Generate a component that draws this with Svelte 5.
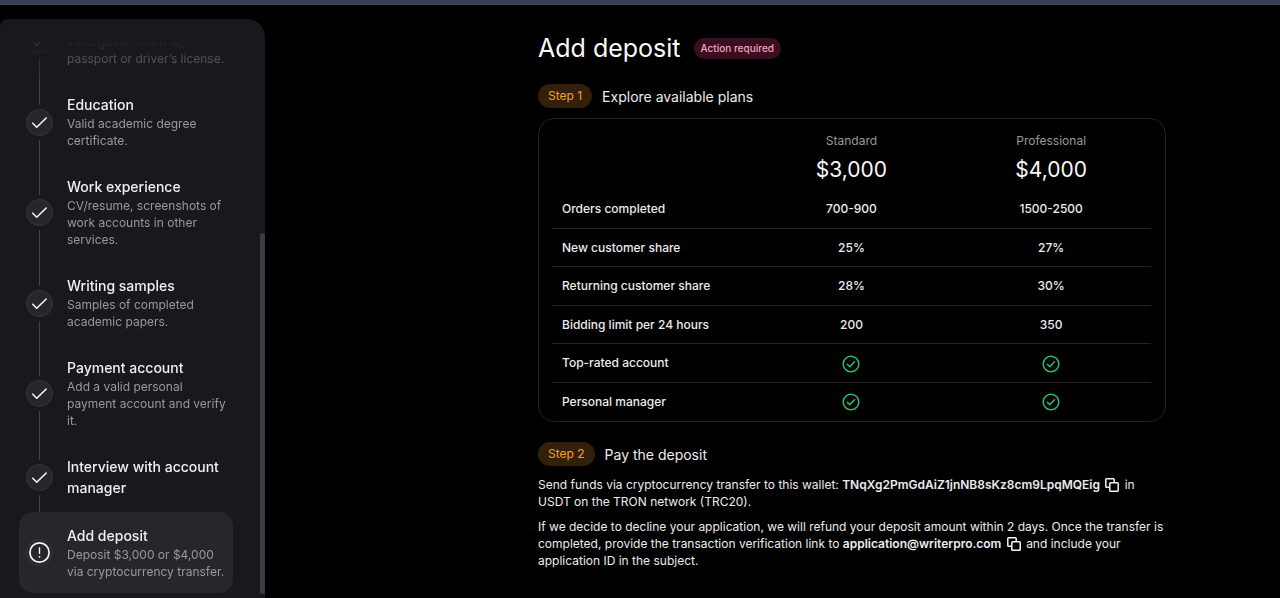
<script>
  const steps = [
    { title: 'ID document', text: 'Valid government ID, passport or driver’s license.', done: true },
    { title: 'Education', text: 'Valid academic degree certificate.', done: true },
    { title: 'Work experience', text: 'CV/resume, screenshots of work accounts in other services.', done: true },
    { title: 'Writing samples', text: 'Samples of completed academic papers.', done: true },
    { title: 'Payment account', text: 'Add a valid personal payment account and verify it.', done: true },
    { title: 'Interview with account manager', text: '', done: true },
    { title: 'Add deposit', text: 'Deposit $3,000 or $4,000 via cryptocurrency transfer.', done: false }
  ];

  const plans = [
    { name: 'Standard', price: '$3,000' },
    { name: 'Professional', price: '$4,000' }
  ];

  // true is drawn as a green check
  const features = [
    { label: 'Orders completed', values: ['700-900', '1500-2500'] },
    { label: 'New customer share', values: ['25%', '27%'] },
    { label: 'Returning customer share', values: ['28%', '30%'] },
    { label: 'Bidding limit per 24 hours', values: ['200', '350'] },
    { label: 'Top-rated account', values: [true, true] },
    { label: 'Personal manager', values: [true, true] }
  ];

  const wallet = 'TNqXg2PmGdAiZ1jnNB8sKz8cm9LpqMQEig';
  const email = 'application@writerpro.com';

  function copy(value) {
    navigator.clipboard?.writeText(value);
  }
</script>

{#snippet copyButton(value, label)}
  <button class="copy" type="button" aria-label={label} onclick={() => copy(value)}>
    <svg viewBox="0 0 14 14" fill="none" stroke="currentColor" stroke-width="1.5" stroke-linejoin="round">
      <path d="M4.8 9.2H1.6a.8.8 0 0 1-.8-.8V1.6a.8.8 0 0 1 .8-.8h6.8a.8.8 0 0 1 .8.8v3.2" />
      <rect x="4.8" y="4.8" width="8.4" height="8.4" rx="0.8" />
    </svg>
  </button>
{/snippet}

<div class="page">
  <div class="topbar"></div>

  <div class="layout">
    <aside class="sidebar">
      <nav class="scroller" aria-label="Application steps">
        <ol class="steps">
          {#each steps as step}
            <li class="step" class:active={!step.done}>
              <div class="rail">
                <span class="line"></span>
                <span class="marker">
                  {#if step.done}
                    <svg viewBox="0 0 27 27" fill="none" stroke="currentColor" stroke-width="1.6" stroke-linecap="round" stroke-linejoin="round">
                      <path d="M6.8 14.2l3.9 4L20.2 9" />
                    </svg>
                  {:else}
                    <svg viewBox="0 0 27 27" fill="none" stroke="currentColor" stroke-linecap="round">
                      <circle cx="13.5" cy="13.5" r="9.6" stroke-width="1.7" />
                      <path d="M13.5 8.8v5.6" stroke-width="1.4" />
                      <circle cx="13.5" cy="17.8" r="0.9" fill="currentColor" stroke="none" />
                    </svg>
                  {/if}
                </span>
                <span class="line"></span>
              </div>
              <div class="step-body">
                <h2 class="step-title">{step.title}</h2>
                {#if step.text}
                  <p class="step-text">{step.text}</p>
                {/if}
              </div>
            </li>
          {/each}
        </ol>
      </nav>
      <div class="thumb"></div>
    </aside>

    <main class="main">
      <div class="content">
        <header class="heading">
          <h1>Add deposit</h1>
          <span class="badge">Action required</span>
        </header>

        <section>
          <div class="section-head">
            <span class="pill">Step 1</span>
            <h2>Explore available plans</h2>
          </div>

          <div class="plans">
            <table>
              <thead>
                <tr>
                  <td></td>
                  {#each plans as plan}
                    <th scope="col">
                      <div class="plan-name">{plan.name}</div>
                      <div class="plan-price">{plan.price}</div>
                    </th>
                  {/each}
                </tr>
              </thead>
              <tbody>
                {#each features as feature}
                  <tr>
                    <th scope="row">{feature.label}</th>
                    {#each feature.values as value}
                      <td>
                        {#if value === true}
                          <svg class="check" viewBox="0 0 18 18" fill="none" stroke="currentColor" stroke-width="1.5" stroke-linecap="round" stroke-linejoin="round" role="img" aria-label="Included">
                            <circle cx="9" cy="9" r="7.8" />
                            <path d="M5.3 9.2l2.5 2.5 4.7-4.9" />
                          </svg>
                        {:else}
                          {value}
                        {/if}
                      </td>
                    {/each}
                  </tr>
                {/each}
              </tbody>
            </table>
          </div>
        </section>

        <section class="payment">
          <div class="section-head">
            <span class="pill">Step 2</span>
            <h2>Pay the deposit</h2>
          </div>

          <p>
            Send funds via cryptocurrency transfer to this wallet: <strong>{wallet}</strong>
            {@render copyButton(wallet, 'Copy wallet address')} in USDT on the TRON network (TRC20).
          </p>
          <p>
            If we decide to decline your application, we will refund your deposit amount within 2 days.
            Once the transfer is completed, provide the transaction verification link to <strong>{email}</strong>
            {@render copyButton(email, 'Copy email')} and include your application ID in the subject.
          </p>
        </section>
      </div>
    </main>
  </div>
</div>

<style>
  :global(body) {
    margin: 0;
    background: #000;
  }

  .page {
    display: flex;
    flex-direction: column;
    height: 100vh;
    overflow: hidden;
    background: #000;
    color: #ececee;
    font-family: Inter, 'Liberation Sans', sans-serif;
    font-size: 12px;
    line-height: 17px;
  }

  h1,
  h2,
  p,
  ol {
    margin: 0;
    padding: 0;
  }

  .topbar {
    flex: none;
    height: 4px;
    background: #384057;
    border-bottom: 1px solid #41454f;
  }

  .layout {
    flex: 1;
    display: flex;
    min-height: 0;
  }

  /* Sidebar */
  .sidebar {
    position: relative;
    flex: none;
    box-sizing: border-box;
    width: 265px;
    margin-top: 14px;
    padding: 21px 32px 5px 19px;
    background: #19181c;
    border-radius: 8px 18px 0 0;
  }

  /* reversed column keeps the list scrolled to the current step */
  .scroller {
    display: flex;
    flex-direction: column-reverse;
    height: 100%;
    overflow-y: auto;
    scrollbar-width: none;
    mask-image: linear-gradient(transparent, #000 44px);
  }

  .thumb {
    position: absolute;
    right: 0;
    top: 37%;
    bottom: 4px;
    width: 5px;
    border-radius: 3px;
    background: #3d3d41;
  }

  .steps {
    list-style: none;
  }

  .step {
    display: flex;
    gap: 14px;
    padding: 0 4px 0 7px;
    border-radius: 14px;
  }

  .rail {
    flex: none;
    display: flex;
    flex-direction: column;
    align-items: center;
    gap: 4px;
    width: 27px;
  }

  .line {
    flex: 1;
    width: 1px;
    background: #434347;
  }

  .marker {
    box-sizing: border-box;
    width: 27px;
    height: 27px;
    border: 1px solid #38383c;
    border-radius: 50%;
    background: #27272b;
    color: #f4f4f5;
  }

  .marker svg {
    display: block;
    margin: -1px;
    width: 27px;
    height: 27px;
  }

  .step-body {
    padding: 13px 0 14px;
  }

  .step-title {
    color: #f0f0f1;
    font-size: 14px;
    font-weight: 500;
    line-height: 21px;
  }

  .step-text {
    color: #98989f;
  }

  .active {
    background: #27272b;
  }

  .active .line {
    visibility: hidden;
  }

  .active .step-body {
    padding-bottom: 13px;
  }

  /* Main column */
  .main {
    flex: 1;
    display: flex;
    justify-content: flex-end;
    padding: 24px 114px 24px 24px;
    overflow-y: auto;
    scrollbar-width: none;
  }

  .content {
    width: 100%;
    max-width: 628px;
  }

  .heading {
    display: flex;
    align-items: center;
    gap: 13px;
    margin-bottom: 17px;
  }

  h1 {
    color: #fafafa;
    font-size: 25px;
    font-weight: 400;
    line-height: 38px;
  }

  .badge {
    padding: 2px 7px;
    border-radius: 10px;
    background: #3a0d20;
    color: #f3a3c0;
    font-size: 10px;
    font-weight: 500;
  }

  .section-head {
    display: flex;
    align-items: center;
    gap: 10px;
    margin-bottom: 10px;
  }

  .section-head h2 {
    font-size: 14px;
    font-weight: 400;
    line-height: 21px;
  }

  .pill {
    padding: 2px 10px;
    border-radius: 12px;
    background: #33200a;
    color: #f0a02c;
    font-size: 12px;
    line-height: 20px;
  }

  /* Plans */
  .plans {
    padding: 12px 14px 1px 13px;
    border: 1px solid #222225;
    border-radius: 16px;
  }

  table {
    width: 100%;
    table-layout: fixed;
    border-collapse: collapse;
  }

  thead th {
    padding: 0;
    font-weight: 400;
  }

  .plan-name {
    color: #98989f;
    line-height: 20px;
  }

  .plan-price {
    color: #fafafa;
    font-size: 21px;
    line-height: 38px;
  }

  tbody th,
  tbody td {
    height: 38px;
    padding: 0 10px;
    box-sizing: border-box;
    font-weight: 500;
    text-align: center;
  }

  tbody th {
    text-align: left;
  }

  tbody tr:nth-child(odd) td {
    height: 39px;
  }

  tbody tr + tr {
    border-top: 1px solid #242427;
  }

  .check {
    display: block;
    width: 18px;
    height: 18px;
    margin: 2px auto 0;
    color: #2dbd6e;
  }

  /* Payment */
  .payment {
    margin-top: 20px;
  }

  .payment p + p {
    margin-top: 8px;
  }

  .payment strong {
    font-weight: 600;
  }

  .copy {
    display: inline-block;
    width: 14px;
    height: 14px;
    margin: 0 2px;
    padding: 0;
    border: 0;
    background: none;
    color: #f4f4f5;
    vertical-align: -3px;
    cursor: pointer;
  }

  .copy svg {
    display: block;
    width: 14px;
    height: 14px;
  }
</style>
